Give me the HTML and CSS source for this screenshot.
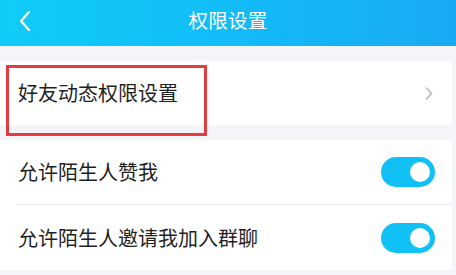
FILE: index.html
```html
<!DOCTYPE html>
<html lang="zh">
<head>
<meta charset="utf-8">
<link rel="stylesheet" href="styles.css">
</head>
<body>
<header class="topbar">
  <div class="back">
    <svg width="12" height="20" viewBox="0 0 12 20"><path d="M10 1 L2 10 L10 19" fill="none" stroke="#fff" stroke-width="2.2" stroke-linecap="round" stroke-linejoin="round"/></svg>
  </div>
  <div class="title">权限设置</div>
  <div></div>
</header>
<main class="content">
  <section class="group">
    <div class="row">
      <span class="label">好友动态权限设置</span>
      <svg class="chev" width="8" height="13" viewBox="0 0 8 13"><path d="M1.5 1 L6.5 6.5 L1.5 12" fill="none" stroke="#b8b8bc" stroke-width="1.6" stroke-linecap="round" stroke-linejoin="round"/></svg>
    </div>
  </section>
  <section class="group">
    <div class="row">
      <span class="label">允许陌生人赞我</span>
      <span class="toggle"><span class="knob"></span></span>
    </div>
    <div class="divider"></div>
    <div class="row row-b">
      <span class="label">允许陌生人邀请我加入群聊</span>
      <span class="toggle"><span class="knob"></span></span>
    </div>
  </section>
  <div class="highlight"></div>
</main>
</body>
</html>
```

FILE: styles.css
```css
html, body {
  margin: 0;
  padding: 0;
}
body {
  width: 456px;
  height: 275px;
  overflow: hidden;
  background: #f4f5f8;
  font-family: "Noto Sans CJK SC", "Noto Sans", sans-serif;
  color: #1f1f1f;
}
.topbar {
  height: 46px;
  display: grid;
  grid-template-columns: 1fr auto 1fr;
  align-items: center;
  background: linear-gradient(90deg, #10cbf8 0%, #12bcf7 50%, #19a9f3 100%);
  color: #fff;
}
.back {
  padding-left: 19px;
  display: flex;
  align-items: center;
  height: 46px;
  padding-top: 0;
}
.back svg { display: block; margin-top: -5px; }
.title {
  font-size: 19.5px;
  line-height: 46px;
  margin-top: -6px;
  letter-spacing: 0.2px;
}
.content {
  position: relative;
  padding-top: 15px;
}
.group {
  background: #fff;
  margin-right: 4px;
  margin-bottom: 15px;
}
.row {
  height: 64px;
  display: flex;
  align-items: center;
  justify-content: space-between;
  padding-left: 18px;
  padding-right: 17px;
}
.row-b { height: 65px; }
.label {
  font-size: 20px;
  line-height: 1;
}
.chev {
  display: block;
  margin-right: 2px;
}
.divider {
  height: 1px;
  margin-left: 17px;
  background: #ececf0;
}
.toggle {
  width: 54px;
  height: 30px;
  border-radius: 15px;
  background: #11c0f4;
  display: flex;
  align-items: center;
  justify-content: flex-end;
  padding-right: 5px;
  box-sizing: border-box;
}
.knob {
  width: 20px;
  height: 20px;
  border-radius: 50%;
  background: #fff;
}
.highlight {
  position: absolute;
  left: 6px;
  top: 19px;
  width: 201px;
  height: 71px;
  border: 3px solid #e23c3f;
  box-sizing: border-box;
}
```
